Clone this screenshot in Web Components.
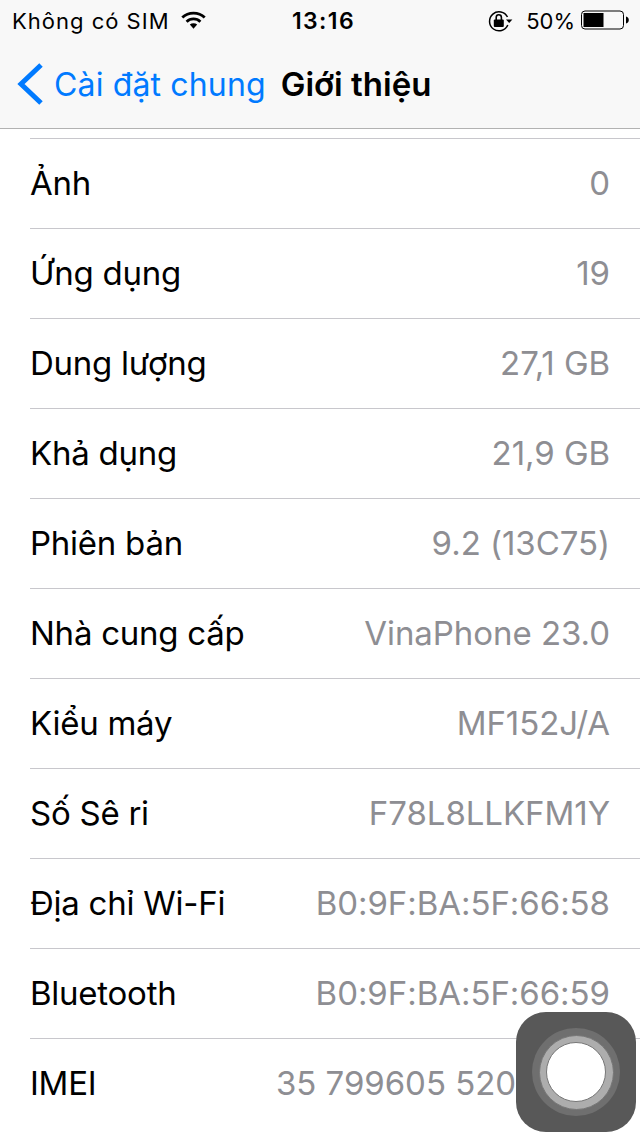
<!DOCTYPE html>
<html lang="vi"><head><meta charset="utf-8"><style>
html,body{margin:0;padding:0;background:#fff;width:640px;height:1136px;overflow:hidden;font-family:Inter,"Noto Sans",sans-serif}
</style></head><body>
<about-screen>
<nav-head></nav-head>
<info-list>
<info-row label="Ảnh" value="0"></info-row>
<info-row label="Ứng dụng" value="19"></info-row>
<info-row label="Dung lượng" value="27,1 GB"></info-row>
<info-row label="Khả dụng" value="21,9 GB"></info-row>
<info-row label="Phiên bản" value="9.2 (13C75)"></info-row>
<info-row label="Nhà cung cấp" value="VinaPhone 23.0"></info-row>
<info-row label="Kiểu máy" value="MF152J/A"></info-row>
<info-row label="Số Sê ri" value="F78L8LLKFM1Y"></info-row>
<info-row label="Địa chỉ Wi-Fi" value="B0:9F:BA:5F:66:58"></info-row>
<info-row label="Bluetooth" value="B0:9F:BA:5F:66:59"></info-row>
<info-row label="IMEI" value="35 799605 520" hidden-tail></info-row>
</info-list>
<assistive-touch></assistive-touch>
</about-screen>
<script>
function def(name,html){customElements.define(name,class extends HTMLElement{constructor(){super();this.attachShadow({mode:'open'}).innerHTML=html}})}
def('about-screen',`<style>:host{display:flex;flex-direction:column;position:relative;width:640px;height:1136px;overflow:hidden;background:#fff}</style><slot></slot>`);
def('nav-head',`<style>
:host{display:flex;flex-direction:column;height:128px;background:#f8f8f8;border-bottom:1px solid #b2b2b2;flex:none;color:#000}
.status{display:flex;align-items:center;box-sizing:border-box;height:40px;padding:2px 11px 0 12px;font-size:22px}
.left{display:flex;align-items:center;gap:11px;flex:1;letter-spacing:1px}
.left svg{margin-top:-2px}
.time{font-weight:600;font-size:23px;letter-spacing:1.4px;margin-left:6px}
.right{display:flex;align-items:center;flex:1;justify-content:flex-end}
.right svg:last-child{margin-top:-2px}
.pct{margin:0 6px 0 13px}
.bar{display:flex;align-items:center;flex:1;padding:0 0 0 16px;font-size:32px}
.back{color:#007aff;margin-left:10px;letter-spacing:.15px}
.title{font-weight:600;font-size:33px;margin-left:15px}
</style>
<div class="status"><div class="left"><span>Không có SIM</span>
<svg width="25" height="20" viewBox="0 0 25 20"><g fill="none" stroke="#000" stroke-width="2.800"><path d="M1.300 7.600C7.400 1.600 17.600 1.600 23.700 7.600"/><path d="M5.600 11.800C9.500 8 15.500 8 19.400 11.800"/></g><path d="M8.800 14.600C11 12.800 14 12.800 16.200 14.600L12.500 18.800Z" fill="#000"/></svg></div>
<span class="time">13:16</span>
<div class="right">
<svg width="26" height="24" viewBox="0 0 26 24"><path d="M20.500 8A9.500 9.500 0 1 0 20.800 16" fill="none" stroke="#000" stroke-width="1.500"/><path d="M19 10.500h6.400l-3.200 3.400Z" fill="#000"/><rect x="6.800" y="10.500" width="10" height="7.500" rx="1" fill="#000"/><path d="M9.200 11V8.400a2.600 2.600 0 0 1 5.200 0V11" fill="none" stroke="#000" stroke-width="1.600"/></svg>
<span class="pct">50%</span>
<svg width="48" height="20" viewBox="0 0 48 20"><rect x=".5" y="1" width="42" height="18" rx="3.500" fill="none" stroke="#000"/><rect x="2.500" y="3" width="20" height="14" fill="#000"/><path d="M45 6.500c1.800.4 2.800 1.700 2.800 3.500s-1 3.100-2.800 3.500Z" fill="#000"/></svg>
</div></div>
<div class="bar"><svg width="28" height="44" viewBox="0 0 28 44"><path d="M25 3L5 22 25 41" fill="none" stroke="#007aff" stroke-width="5"/></svg><span class="back">Cài đặt chung</span><span class="title">Giới thiệu</span></div>`);
def('info-list',`<style>:host{display:block;margin-top:9px;padding-left:30px}::slotted(*){border-top:1px solid #c8c7cc}</style><slot></slot>`);
customElements.define('info-row',class extends HTMLElement{constructor(){super();const s=this.attachShadow({mode:'open'});s.innerHTML=`<style>:host{display:flex;box-sizing:border-box;height:90px;align-items:center;justify-content:space-between;padding:0 30px 2px 0;font-size:33px;color:#000;white-space:nowrap}:host([hidden-tail]){padding-right:124px}.l{letter-spacing:-.25px}.v{color:#8e8e93;letter-spacing:-.05px}</style><span class="l">${this.getAttribute('label')}</span><span class="v">${this.getAttribute('value')}</span>`}});
def('assistive-touch',`<style>
:host{position:absolute;left:516px;top:1012px;width:120px;height:120px;border-radius:30px;background:#585858;display:flex;align-items:center;justify-content:center}
.a{width:88px;height:88px;border-radius:50%;background:#6f6f6f;display:flex;align-items:center;justify-content:center}
.b{width:75px;height:75px;border-radius:50%;background:#adadad;border:1px solid #777;box-sizing:border-box;display:flex;align-items:center;justify-content:center}
.c{width:60px;height:60px;border-radius:50%;background:#fff;border:1px solid #777;box-sizing:border-box}
</style><div class="a"><div class="b"><div class="c"></div></div></div>`);
</script>
</body></html>
